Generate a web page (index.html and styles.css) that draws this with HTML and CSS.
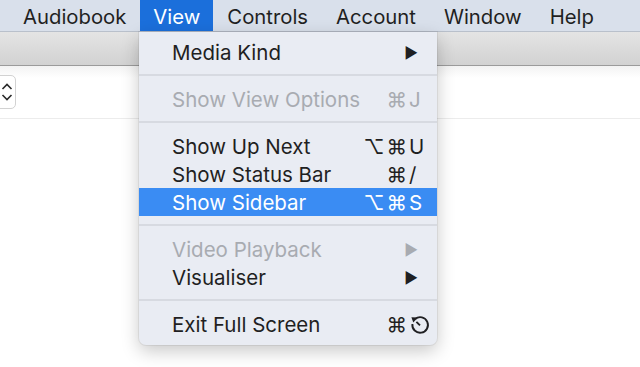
FILE: index.html
```html
<!DOCTYPE html>
<html lang="en">
<head>
    <meta charset="UTF-8">
    <meta name="viewport" content="width=device-width, initial-scale=1.0">
    <title>View menu</title>
    <link rel="stylesheet" href="styles.css">
</head>
<body>
    <div class="menubar">
        <span class="menu-title">Audiobook</span>
        <span class="menu-title active">View</span>
        <span class="menu-title">Controls</span>
        <span class="menu-title">Account</span>
        <span class="menu-title">Window</span>
        <span class="menu-title">Help</span>
    </div>
    <div class="toolbar"></div>
    <div class="content">
        <div class="filter-row">
            <div class="stepper">
                <svg width="12" height="22" viewBox="0 0 12 22">
                    <path d="M1.5 8 L6 3.5 L10.5 8 M1.5 14 L6 18.5 L10.5 14" fill="none" stroke="#2a2a2a" stroke-width="1.6"/>
                </svg>
            </div>
        </div>
    </div>

    <div class="menu">
        <div class="item"><span>Media Kind</span><span class="arrow">&#9654;</span></div>
        <div class="sep"></div>
        <div class="item disabled"><span>Show View Options</span><span class="key"><span class="mods">&#8984;</span><span class="char">J</span></span></div>
        <div class="sep"></div>
        <div class="item"><span>Show Up Next</span><span class="key"><span class="mods">&#8997;&#8984;</span><span class="char">U</span></span></div>
        <div class="item"><span>Show Status Bar</span><span class="key"><span class="mods">&#8984;</span><span class="char">/</span></span></div>
        <div class="item selected"><span>Show Sidebar</span><span class="key"><span class="mods">&#8997;&#8984;</span><span class="char">S</span></span></div>
        <div class="sep"></div>
        <div class="item disabled"><span>Video Playback</span><span class="arrow">&#9654;</span></div>
        <div class="item"><span>Visualiser</span><span class="arrow">&#9654;</span></div>
        <div class="sep"></div>
        <div class="item">
            <span>Exit Full Screen</span>
            <span class="key"><span class="mods">&#8984;</span><span class="char">
                <svg class="esc" width="20" height="20" viewBox="0 0 20 20">
                    <path d="M5.2 3.9 A7.8 7.8 0 1 1 2.4 9" fill="none" stroke="#1f1f22" stroke-width="1.9"/>
                    <path d="M1.4 2.2 L7.8 2.6 L3.3 7.6 Z" fill="#1f1f22"/>
                    <path d="M10 10.4 L6.4 6.8" stroke="#1f1f22" stroke-width="1.9"/>
                </svg>
            </span></span>
        </div>
    </div>
</body>
</html>
```

FILE: styles.css
```css
body {
    margin: 0;
    width: 640px;
    height: 367px;
    overflow: hidden;
    position: relative;
    background: #fff;
    font-family: Inter, "Noto Sans", sans-serif;
    color: #1f1f22;
}
.menubar {
    height: 32px;
    display: flex;
    align-items: stretch;
    padding-left: 9px;
    background: #d9e0eb;
    border-bottom: 1px solid #b9c0cb;
    box-sizing: border-box;
    font-size: 20.3px;
}
.menu-title {
    display: flex;
    align-items: center;
    padding: 2px 14px 0;
}
.menu-title.active {
    background: #1b6fdb;
    color: #fff;
    padding: 2px 13px 0 13px;
}
.toolbar {
    height: 34px;
    background: linear-gradient(to bottom, #e4e4e4, #d2d2d2);
    border-bottom: 1px solid #9b9b9b;
    box-sizing: border-box;
}
.content {
    background: #fff;
}
.filter-row {
    height: 52px;
    border-bottom: 1px solid #ececec;
    display: flex;
    align-items: center;
    background: linear-gradient(to bottom, #f3f3f3, #fff 12px);
}
.stepper {
    width: 26px;
    height: 34px;
    margin-left: -10px;
    border: 1px solid #d2d2d2;
    border-radius: 5px;
    background: #fff;
    display: flex;
    align-items: center;
    justify-content: flex-end;
    padding-right: 2px;
    box-sizing: border-box;
}
.menu {
    position: absolute;
    left: 139px;
    top: 32px;
    width: 298px;
    padding: 6px 0 7px;
    background: #e9ecf3;
    border-radius: 0 0 7px 7px;
    box-shadow: 0 6px 18px rgba(0, 0, 0, 0.22), 0 0 0 1px rgba(0, 0, 0, 0.06);
    font-size: 20.5px;
}
.item {
    height: 28px;
    box-sizing: border-box;
    padding: 1px 12px 0 33px;
    display: flex;
    align-items: center;
    justify-content: space-between;
}
.item.disabled {
    color: #a8abb1;
}
.item.selected {
    background: #3a8cf3;
    color: #fff;
}
.key {
    display: flex;
    align-items: center;
}
.mods {
    letter-spacing: 2px;
}
.char {
    width: 16px;
    display: flex;
    align-items: center;
}
.arrow {
    font-size: 15px;
    margin-right: 7px;
}
.sep {
    height: 2px;
    margin: 8px 0 9px;
    background: #d7dae1;
}
.esc {
    flex-shrink: 0;
    margin-left: 1px;
}
```
